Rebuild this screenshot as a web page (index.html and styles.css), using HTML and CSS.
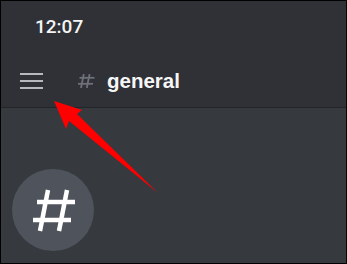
FILE: index.html
```html
<!DOCTYPE html>
<html>
<head>
<meta charset="utf-8">
<link rel="stylesheet" href="styles.css">
</head>
<body>
<div class="screen">
  <header class="top">
    <div class="status"><span class="time">12:07</span></div>
    <div class="nav">
      <svg class="menu" width="23" height="16" viewBox="0 0 23 16">
        <rect x="0" y="0" width="23" height="2" fill="#b7b9bc"/>
        <rect x="0" y="7" width="23" height="2" fill="#b7b9bc"/>
        <rect x="0" y="14" width="23" height="2" fill="#b7b9bc"/>
      </svg>
      <svg class="hash" width="17" height="14" viewBox="0 0 17 14">
        <g stroke="#6e7177" stroke-width="1.8" fill="none">
          <line x1="5.8" y1="0" x2="3" y2="14"/>
          <line x1="11.6" y1="0" x2="8.8" y2="14"/>
          <line x1="1.5" y1="3.8" x2="16.5" y2="3.8"/>
          <line x1="0" y1="9.8" x2="15" y2="9.8"/>
        </g>
      </svg>
      <span class="channel">general</span>
    </div>
  </header>
  <main class="content">
    <div class="avatar">
      <svg width="82" height="82" viewBox="0 0 82 82">
        <g stroke="#ffffff" stroke-width="4.5" fill="none">
          <line x1="36" y1="21" x2="28" y2="62"/>
          <line x1="55" y1="21" x2="47" y2="62"/>
          <line x1="25" y1="33" x2="63" y2="33"/>
          <line x1="21" y1="51" x2="59" y2="51"/>
        </g>
      </svg>
    </div>
  </main>
  <svg class="arrow" width="347" height="264" viewBox="0 0 347 264">
    <polygon points="54,101 82,110 77,114 158,193 69,121 66,129" fill="#ff0000"/>
  </svg>
</div>
</body>
</html>
```
FILE: styles.css
```css
html, body {
  margin: 0;
  padding: 0;
  background: #000;
}
.screen {
  position: relative;
  width: 347px;
  height: 264px;
  box-sizing: border-box;
  border: 1px solid #000;
  background: #36393e;
  display: flex;
  flex-direction: column;
  overflow: hidden;
}
.top {
  height: 107px;
  box-sizing: border-box;
  background: #2f3136;
  border-bottom: 1px solid #232428;
  display: flex;
  flex-direction: column;
}
.status {
  padding-top: 15px;
  padding-left: 34px;
  height: 22px;
}
.time {
  font-family: Roboto, "Liberation Sans", sans-serif;
  font-weight: 500;
  font-size: 19px;
  line-height: 22px;
  color: #f4f4f4;
}
.nav {
  margin-top: 28px;
  height: 30px;
  display: flex;
  align-items: center;
  padding-left: 19px;
}
.menu {
  display: block;
}
.hash {
  display: block;
  margin-left: 35px;
}
.channel {
  margin-left: 12px;
  font-family: "Liberation Sans", Arial, sans-serif;
  font-weight: bold;
  font-size: 20.5px;
  line-height: 24px;
  color: #f6f6f6;
}
.content {
  flex: 1;
  background: #36393e;
  padding-top: 61px;
  padding-left: 11px;
}
.avatar {
  width: 82px;
  height: 82px;
  border-radius: 50%;
  background: #4f545c;
}
.avatar svg {
  display: block;
}
.arrow {
  position: absolute;
  left: -1px;
  top: -1px;
}
```
